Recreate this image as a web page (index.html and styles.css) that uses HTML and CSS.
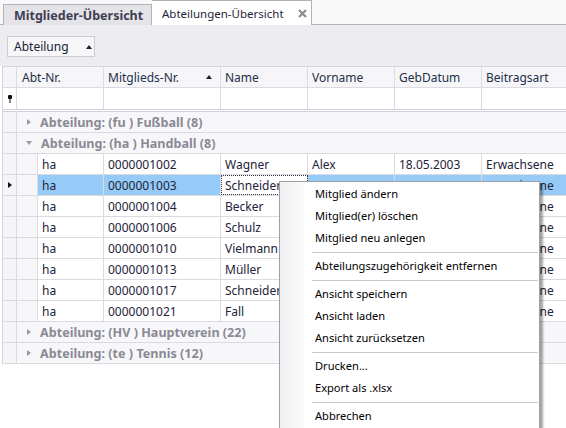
FILE: index.html
```html
<!DOCTYPE html>
<html lang="de">
<head>
<meta charset="utf-8">
<title>Abteilungen-Übersicht</title>
<link rel="stylesheet" href="styles.css">
</head>
<body>
<div class="tabs">
  <div class="tab tab-inactive">Mitglieder-Übersicht</div>
  <div class="tab tab-active">Abteilungen-Übersicht
    <svg class="close" width="9" height="9" viewBox="0 0 9 9"><path d="M1 1L8 8M8 1L1 8" stroke="#8c8c94" stroke-width="2.2"/></svg>
  </div>
</div>
<div class="toolbar">
  <div class="groupbtn">Abteilung <span class="tri-up"></span></div>
</div>
<div class="grid">
  <div class="row header">
    <div class="ind"></div>
    <div class="cell c1">Abt-Nr.</div>
    <div class="cell c2">Mitglieds-Nr.<span class="sort"></span></div>
    <div class="cell c3">Name</div>
    <div class="cell c4">Vorname</div>
    <div class="cell c5">GebDatum</div>
    <div class="cell c6">Beitragsart</div>
  </div>
  <div class="row filter">
    <div class="ind"><svg width="6" height="8" viewBox="0 0 6 8"><rect x="1" y="0" width="4" height="4" rx="1" fill="#111"/><rect x="2.5" y="3" width="1" height="5" fill="#111"/></svg></div>
    <div class="cell c1"></div>
    <div class="cell c2"></div>
    <div class="cell c3"></div>
    <div class="cell c4"></div>
    <div class="cell c5"></div>
    <div class="cell c6"></div>
  </div>
  <div class="row group">
    <div class="ind"></div>
    <div class="gcell"><span class="exp exp-right"></span>Abteilung: (fu ) Fußball (8)</div>
  </div>
  <div class="row group">
    <div class="ind"></div>
    <div class="gcell"><span class="exp exp-down"></span>Abteilung: (ha ) Handball (8)</div>
  </div>
  <div class="row data">
    <div class="ind"></div><div class="indent"></div>
    <div class="cell d1">ha</div><div class="cell c2">0000001002</div><div class="cell c3">Wagner</div><div class="cell c4">Alex</div><div class="cell c5">18.05.2003</div><div class="cell c6">Erwachsene</div>
  </div>
  <div class="row data selected">
    <div class="ind"><span class="cur"></span></div><div class="indent"></div>
    <div class="cell d1">ha</div><div class="cell c2">0000001003</div><div class="cell c3 focus">Schneider</div><div class="cell c4"></div><div class="cell c5"></div><div class="cell c6 under">Erwachsene</div>
  </div>
  <div class="row data">
    <div class="ind"></div><div class="indent"></div>
    <div class="cell d1">ha</div><div class="cell c2">0000001004</div><div class="cell c3">Becker</div><div class="cell c4"></div><div class="cell c5"></div><div class="cell c6 under">Erwachsene</div>
  </div>
  <div class="row data">
    <div class="ind"></div><div class="indent"></div>
    <div class="cell d1">ha</div><div class="cell c2">0000001006</div><div class="cell c3">Schulz</div><div class="cell c4"></div><div class="cell c5"></div><div class="cell c6 under">Erwachsene</div>
  </div>
  <div class="row data">
    <div class="ind"></div><div class="indent"></div>
    <div class="cell d1">ha</div><div class="cell c2">0000001010</div><div class="cell c3">Vielmann</div><div class="cell c4"></div><div class="cell c5"></div><div class="cell c6 under">Erwachsene</div>
  </div>
  <div class="row data">
    <div class="ind"></div><div class="indent"></div>
    <div class="cell d1">ha</div><div class="cell c2">0000001013</div><div class="cell c3">Müller</div><div class="cell c4"></div><div class="cell c5"></div><div class="cell c6 under">Erwachsene</div>
  </div>
  <div class="row data">
    <div class="ind"></div><div class="indent"></div>
    <div class="cell d1">ha</div><div class="cell c2">0000001017</div><div class="cell c3">Schneider</div><div class="cell c4"></div><div class="cell c5"></div><div class="cell c6 under">Erwachsene</div>
  </div>
  <div class="row data">
    <div class="ind"></div><div class="indent"></div>
    <div class="cell d1">ha</div><div class="cell c2">0000001021</div><div class="cell c3">Fall</div><div class="cell c4"></div><div class="cell c5"></div><div class="cell c6 under">Erwachsene</div>
  </div>
  <div class="row group">
    <div class="ind"></div>
    <div class="gcell"><span class="exp exp-right"></span>Abteilung: (HV ) Hauptverein (22)</div>
  </div>
  <div class="row group">
    <div class="ind"></div>
    <div class="gcell"><span class="exp exp-right"></span>Abteilung: (te ) Tennis (12)</div>
  </div>
</div>
<div class="menu">
  <div class="item">Mitglied ändern</div>
  <div class="item">Mitglied(er) löschen</div>
  <div class="item">Mitglied neu anlegen</div>
  <div class="sep"></div>
  <div class="item">Abteilungszugehörigkeit entfernen</div>
  <div class="sep"></div>
  <div class="item">Ansicht speichern</div>
  <div class="item">Ansicht laden</div>
  <div class="item">Ansicht zurücksetzen</div>
  <div class="sep"></div>
  <div class="item">Drucken...</div>
  <div class="item">Export als .xlsx</div>
  <div class="sep"></div>
  <div class="item">Abbrechen</div>
</div>
</body>
</html>
```
FILE: styles.css
```css
* { box-sizing: border-box; }
html, body {
  margin: 0;
  width: 566px;
  height: 428px;
  overflow: hidden;
  background: #ffffff;
  font-family: "Noto Sans", "DejaVu Sans", sans-serif;
  font-size: 12px;
  color: #232339;
}

/* tabs */
.tabs {
  display: flex;
  align-items: flex-end;
  height: 25px;
  padding-left: 3px;
  background: #f8f8f9;
  border-bottom: 1px solid #b2b2bb;
}
.tab {
  display: flex;
  align-items: center;
  border: 1px solid #b2b2bb;
  border-bottom: none;
  margin-bottom: -1px;
}
.tab-inactive {
  width: 149px;
  height: 21px;
  padding-left: 10px;
  background: #e3e3e8;
  font-weight: bold;
  font-size: 12.5px;
  color: #3e3e52;
}
.tab-active {
  width: 160px;
  height: 25px;
  padding-left: 10px;
  background: #ffffff;
  border-left: none;
  font-size: 11.5px;
  color: #24243a;
}
.close { margin-left: 14px; }

/* toolbar */
.toolbar {
  height: 41px;
  background: #ededf1;
  padding: 11px 0 0 7px;
}
.groupbtn {
  display: flex;
  align-items: center;
  width: 88px;
  height: 21px;
  padding-left: 6px;
  background: #f7f7f9;
  border: 1px solid #cdcdd5;
  color: #202034;
}
.tri-up {
  width: 0; height: 0;
  margin-left: 17px;
  border-left: 3.5px solid transparent;
  border-right: 3.5px solid transparent;
  border-bottom: 4px solid #202020;
}

/* grid */
.grid {
  margin-left: 2px;
  border-left: 1px solid #d4d4dc;
  border-top: 1px solid #d4d4dc;
  overflow: hidden;
}
.row {
  display: flex;
  height: 21px;
  border-bottom: 1px solid #dadae0;
  white-space: nowrap;
}
.ind {
  flex: 0 0 14px;
  background: #f5f5f7;
  border-right: 1px solid #dadae0;
  display: flex;
  align-items: center;
  justify-content: center;
}
.cell {
  flex: 0 0 auto;
  display: flex;
  align-items: center;
  padding-left: 4px;
  border-right: 1px solid #dadae0;
  overflow: hidden;
}
.c1 { width: 87px; padding-left: 5px; }
.d1 { width: 66px; }
.c2 { width: 117px; }
.c3, .c4, .c5, .c6 { width: 87px; }
.c6.under { padding-left: 4px; }
.header { background: #f6f6f8; }
.header .cell { color: #24304a; }
.sort {
  width: 0; height: 0;
  margin-left: 27px;
  border-left: 3.5px solid transparent;
  border-right: 3.5px solid transparent;
  border-bottom: 4px solid #202020;
}
.filter {
  background: #ffffff;
  height: 24px;
  border-bottom: 3px double #d0d0d8;
}
.filter .ind { background: #ffffff; }
.group { background: #f7f7f9; }
.gcell {
  display: flex;
  align-items: center;
  padding-left: 9px;
  font-weight: bold;
  font-size: 12.6px;
  color: #8a8a94;
}
.exp {
  width: 0; height: 0;
  margin-right: 9px;
}
.exp-right {
  border-top: 3.5px solid transparent;
  border-bottom: 3.5px solid transparent;
  border-left: 4px solid #9a9aa2;
  margin-left: 1px;
}
.exp-down {
  border-left: 3.5px solid transparent;
  border-right: 3.5px solid transparent;
  border-top: 4px solid #9a9aa2;
}
.data { background: #ffffff; }
.indent {
  flex: 0 0 21px;
  background: #f7f7f9;
  border-right: 1px solid #dadae0;
}
.selected .cell { background: #95cbf6; }
.selected .focus {
  background: #ffffff;
  outline: 1px dotted #303040;
  outline-offset: -1px;
}
.cur {
  width: 0; height: 0;
  border-top: 3.5px solid transparent;
  border-bottom: 3.5px solid transparent;
  border-left: 4px solid #101010;
}

/* context menu */
.menu {
  position: absolute;
  left: 279px;
  top: 181px;
  width: 261px;
  height: 260px;
  padding: 1px 0;
  background: linear-gradient(to right, #efeff1 0px, #fbfbfc 24px, #ffffff 25px);
  border: 1px solid #a0a0a4;
  box-shadow: 3px 3px 2px rgba(0, 0, 0, 0.35);
  color: #000000;
  font-size: 11.1px;
}
.item {
  height: 22px;
  line-height: 22px;
  padding-left: 35px;
  white-space: nowrap;
}
.sep {
  height: 1px;
  margin: 3px 1px 2px 32px;
  background: #c8c8cc;
}
```
